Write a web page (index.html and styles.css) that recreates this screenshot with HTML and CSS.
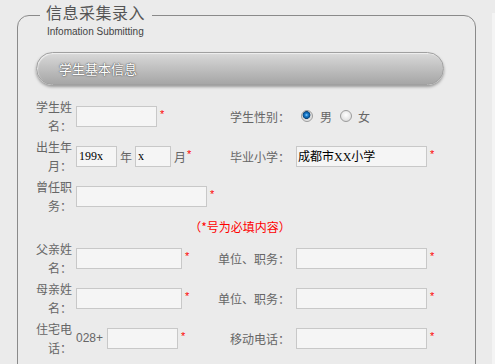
FILE: index.html
```html
<!DOCTYPE html>
<html lang="zh-CN">
<head>
<meta charset="utf-8">
<title>信息采集录入</title>
<link rel="stylesheet" href="styles.css">
</head>
<body>
<div class="page">
  <div class="main">
    <div class="panel">
      <div class="legend">
        <div class="legend-title">信息采集录入</div>
        <div class="legend-sub">Infomation Submitting</div>
      </div>
      <div class="bar">学生基本信息</div>
      <div class="form">
        <div class="lbl">学生姓名：</div>
        <div class="fld"><input class="inp w81" type="text"><span class="req">*</span></div>
        <div class="lbl2">学生性别：</div>
        <div class="fld r"><input class="radio" type="radio" name="sex" checked><span class="opt">男</span><input class="radio second" type="radio" name="sex"><span class="opt">女</span></div>

        <div class="lbl">出生年月：</div>
        <div class="fld"><input class="inp w40" type="text" value="199x"><span class="unit">年</span><input class="inp w36" type="text" value="x"><span class="unit last">月</span><span class="req tight">*</span></div>
        <div class="lbl2">毕业小学：</div>
        <div class="fld r"><input class="inp w131" type="text" value="成都市XX小学"><span class="req">*</span></div>

        <div class="lbl">曾任职务：</div>
        <div class="fld span3"><input class="inp w130" type="text"><span class="req">*</span></div>

        <div class="note">（*号为必填内容）</div>

        <div class="lbl">父亲姓名：</div>
        <div class="fld"><input class="inp w105" type="text"><span class="req">*</span></div>
        <div class="lbl2">单位、职务：</div>
        <div class="fld r"><input class="inp w131" type="text"><span class="req">*</span></div>

        <div class="lbl">母亲姓名：</div>
        <div class="fld"><input class="inp w105" type="text"><span class="req">*</span></div>
        <div class="lbl2">单位、职务：</div>
        <div class="fld r"><input class="inp w131" type="text"><span class="req">*</span></div>

        <div class="lbl">住宅电话：</div>
        <div class="fld"><span class="prefix">028+</span><input class="inp w70" type="text"><span class="req">*</span></div>
        <div class="lbl2">移动电话：</div>
        <div class="fld r"><input class="inp w131" type="text"><span class="req">*</span></div>
      </div>
    </div>
  </div>
  <div class="strip"></div>
</div>
</body>
</html>
```

FILE: styles.css
```css
html, body {
  margin: 0;
  height: 100%;
  overflow: hidden;
}
body {
  background: #ebebeb;
  font-family: "Noto Sans CJK SC", sans-serif;
  font-size: 12px;
  color: #666;
}
.page {
  display: flex;
  height: 100%;
}
.main {
  flex: 1;
  padding: 15px 0 0 17px;
}
.strip {
  width: 3px;
  margin-top: 13px;
  background: #f4f4f4;
}
.panel {
  position: relative;
  box-sizing: border-box;
  width: 459px;
  height: 420px;
  border: 1px solid #8a8a8a;
  border-radius: 12px;
  padding: 36px 0 0 16px;
}
.legend {
  position: absolute;
  left: 22px;
  top: -13px;
  padding: 0 7px 0 6px;
  background: #ebebeb;
}
.legend-title {
  font-size: 16px;
  line-height: 18px;
  letter-spacing: 0.5px;
  color: #555;
}
.legend-sub {
  font-family: "Liberation Sans", sans-serif;
  font-size: 10px;
  line-height: 12px;
  color: #444;
  margin: 5px 0 0 1px;
}
.bar {
  margin-left: 2px;
  width: 408px;
  height: 33px;
  box-sizing: border-box;
  border: 1px solid #a0a0a0;
  border-radius: 17px;
  background: linear-gradient(#d9d9d9, #c2c2c2 45%, #a6a6a6);
  box-shadow: 0 2px 3px rgba(0, 0, 0, 0.35), inset 1px 1px 1px rgba(255, 255, 255, 0.6);
  color: #fff;
  font-size: 13px;
  line-height: 31px;
  padding-left: 22px;
  text-shadow: 0 0 2px #505050, 0 0 1px #505050;
}
.form {
  margin-top: 12px;
  width: 412px;
  display: grid;
  grid-template-columns: 42px 140px 74px 156px;
  grid-template-rows: 38px 38px 38px 20px 38px 38px 38px;
  row-gap: 2px;
  align-items: center;
}
.lbl {
  text-align: right;
  padding-right: 4px;
  line-height: 19px;
}
.lbl2 {
  text-align: right;
  line-height: 19px;
}
.fld {
  display: flex;
  align-items: center;
}
.fld.r {
  padding-left: 6px;
}
.span3 {
  grid-column: 2 / 5;
}
.note {
  grid-column: 1 / 5;
  text-align: center;
  color: #f00;
  line-height: 20px;
}
.inp {
  box-sizing: border-box;
  height: 21px;
  margin: 0;
  border: 1px solid #c8c8c8;
  background: #f5f5f5;
  padding: 0 1px;
  font-family: "Liberation Serif", "Noto Sans CJK SC", serif;
  font-size: 12px;
  color: #000;
  outline: none;
}
.w40 { width: 41px; padding-left: 2px; }
.w36 { width: 36px; padding-left: 2px; }
.w70 { width: 71px; }
.w81 { width: 81px; }
.w105 { width: 106px; }
.w130 { width: 131px; }
.w131 { width: 131px; }
.req {
  color: #f00;
  font-family: "Liberation Sans", sans-serif;
  font-size: 11px;
  line-height: 14px;
  margin-left: 3px;
  align-self: center;
  margin-top: -5px;
}
.req.tight {
  margin-left: 1px;
}
.unit {
  margin: 0 3px;
}
.unit.last {
  margin-right: 0;
}
.prefix {
  font-family: "Liberation Sans", sans-serif;
  font-size: 12px;
  margin-right: 4px;
}
.radio {
  appearance: none;
  -webkit-appearance: none;
  box-sizing: border-box;
  width: 12px;
  height: 12px;
  margin: 0 0 0 5px;
  border-radius: 50%;
  border: 1px solid #9c9c9c;
  background: radial-gradient(circle at 50% 40%, #ffffff 0, #e6e6e6 60%, #cfcfcf 100%);
}
.radio:checked {
  background: radial-gradient(circle at 45% 40%, #8fd0ff 0, #1b7fd0 1.5px, #0c5a9e 3px, #0a3f70 3.6px, #d8d8d8 4.2px, #f4f4f4 100%);
}
.radio.second {
  margin-left: 8px;
}
.opt {
  margin-left: 7px;
}
.radio.second + .opt {
  margin-left: 6px;
}
```
